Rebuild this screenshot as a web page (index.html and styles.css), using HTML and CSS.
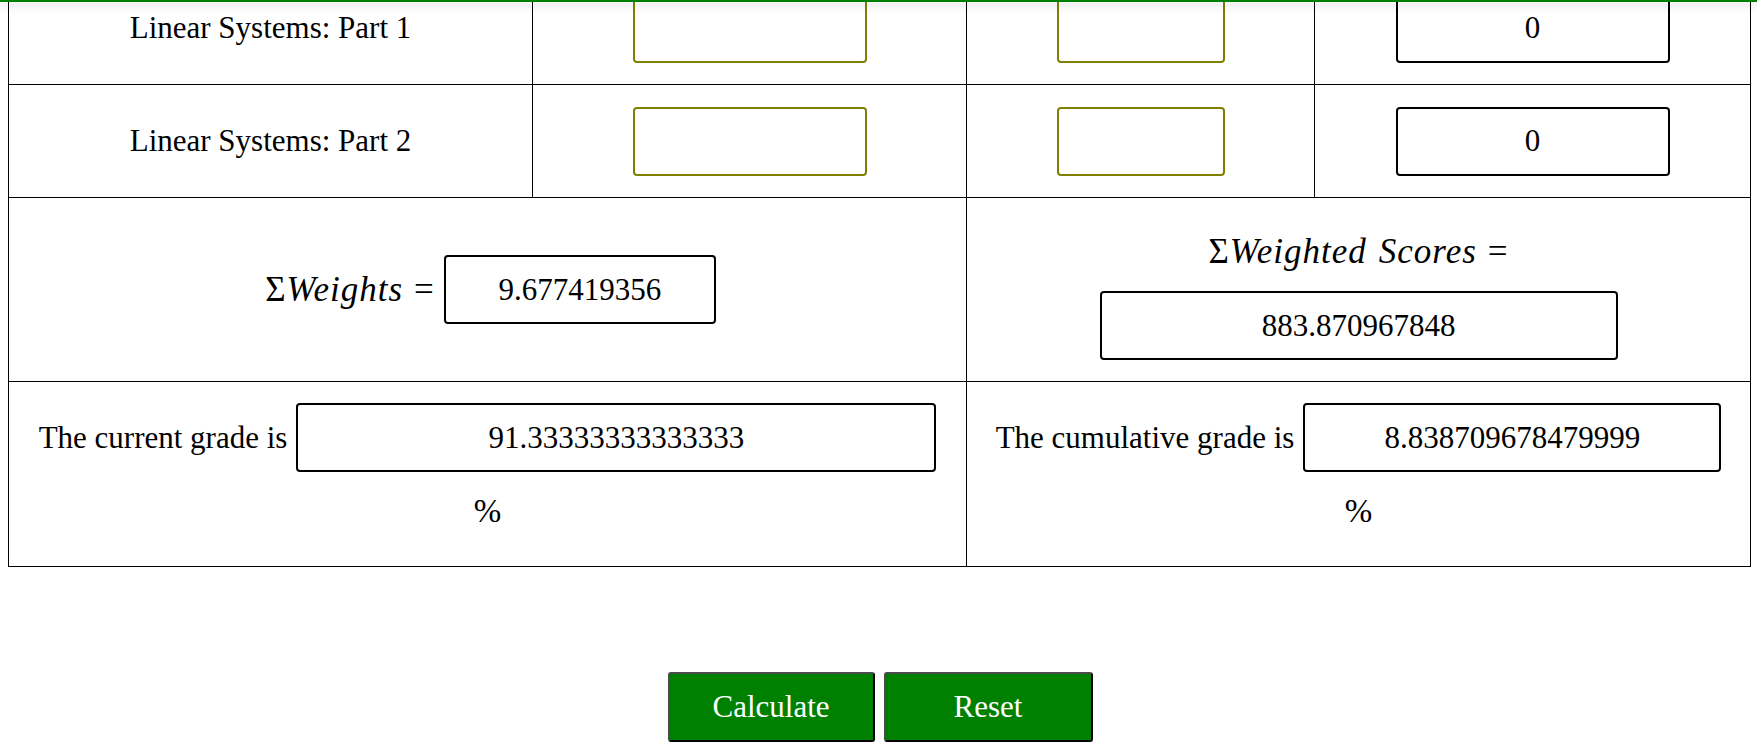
FILE: index.html
```html
<!DOCTYPE html>
<html lang="en">
<head>
<meta charset="utf-8">
<title>Grade Calculator</title>
<link rel="stylesheet" href="styles.css">
</head>
<body>
<div class="topbar"></div>
<main class="page">
  <table class="grades">
    <colgroup>
      <col class="c-name">
      <col class="c-score">
      <col class="c-weight">
      <col class="c-wscore">
    </colgroup>
    <tbody>
      <tr class="row-item">
        <td class="name">Linear Systems: Part 1</td>
        <td><input class="field field-score" type="text"></td>
        <td><input class="field field-weight" type="text"></td>
        <td><input class="out out-wscore" type="text" value="0" readonly></td>
      </tr>
      <tr class="row-item">
        <td class="name">Linear Systems: Part 2</td>
        <td><input class="field field-score" type="text"></td>
        <td><input class="field field-weight" type="text"></td>
        <td><input class="out out-wscore" type="text" value="0" readonly></td>
      </tr>
      <tr class="row-sum">
        <td colspan="2">
          <div class="sum-inline">
            <span class="math">Σ<i>Weights</i><span class="eq">=</span></span>
            <input class="out out-sumw" type="text" value="9.677419356" readonly>
          </div>
        </td>
        <td colspan="2">
          <div class="sum-stack">
            <span class="math">Σ<i>Weighted</i><span class="sp"></span><i>Scores</i><span class="eq">=</span></span>
            <input class="out out-sumws" type="text" value="883.870967848" readonly>
          </div>
        </td>
      </tr>
      <tr class="row-grade">
        <td colspan="2">
          <div class="grade-line">
            <span>The current grade is</span>
            <input class="out out-current" type="text" value="91.33333333333333" readonly>
          </div>
          <div class="pct">%</div>
        </td>
        <td colspan="2">
          <div class="grade-line">
            <span>The cumulative grade is</span>
            <input class="out out-cumulative" type="text" value="8.838709678479999" readonly>
          </div>
          <div class="pct">%</div>
        </td>
      </tr>
    </tbody>
  </table>
  <div class="actions">
    <button class="btn btn-calc" type="button">Calculate</button>
    <button class="btn btn-reset" type="button">Reset</button>
  </div>
</main>
</body>
</html>
```

FILE: styles.css
```css
html, body {
  margin: 0;
  padding: 0;
  background: #fff;
}

body {
  font-family: "Liberation Serif", "Times New Roman", serif;
  font-size: 31px;
  color: #000;
}

.topbar {
  position: fixed;
  top: 0;
  left: 0;
  right: 0;
  height: 2px;
  background: #008000;
  box-shadow: 0 3px 10px rgba(0, 0, 0, 0.28);
  z-index: 10;
}

.page {
  padding: 0 8px 20px;
}

.grades {
  width: 100%;
  table-layout: fixed;
  border-collapse: collapse;
  margin-top: -29px;
}

.c-name { width: 524px; }
.c-score { width: 434px; }
.c-weight { width: 348px; }
.c-wscore { width: 436px; }

.grades td {
  border: 1px solid #000;
  padding: 0;
  text-align: center;
  vertical-align: middle;
}

.row-item td { height: 112px; }
.row-sum td { height: 183px; }
.row-grade td {
  height: 184px;
  vertical-align: top;
}

.field, .out {
  box-sizing: border-box;
  height: 69px;
  font: inherit;
  text-align: center;
  border-radius: 4px;
  background: #fff;
  color: #000;
  padding: 0 4px;
  margin: 0;
  vertical-align: middle;
}

.field { border: 2px solid #808000; }
.out { border: 2px solid #000; }

.field-score { width: 234px; }
.field-weight { width: 168px; }
.out-wscore { width: 274px; }
.out-sumw { width: 272px; }
.out-sumws { width: 518px; }
.out-current { width: 640px; }
.out-cumulative { width: 418px; }

.math {
  font-family: "Liberation Serif", "Times New Roman", serif;
  font-size: 35px;
  letter-spacing: 1px;
  white-space: nowrap;
}

.math i { font-style: italic; }
.math .eq { margin-left: 11px; }
.math .sp { display: inline-block; width: 12px; }

.sum-inline {
  display: flex;
  align-items: center;
  justify-content: center;
  gap: 9px;
  padding-left: 6px;
}

.sum-stack {
  display: flex;
  flex-direction: column;
  align-items: center;
  gap: 19px;
  padding-top: 13px;
}

.grade-line {
  display: flex;
  align-items: center;
  justify-content: center;
  gap: 9px;
  margin-top: 21px;
}

.pct {
  margin-top: 21px;
  line-height: 36px;
  font-size: 33px;
}

.actions {
  display: flex;
  justify-content: center;
  gap: 9px;
  margin-top: 105px;
  padding-left: 3px;
}

.btn {
  height: 70px;
  font: inherit;
  color: #fff;
  background: #008000;
  border: 2px solid;
  border-color: #4a4a4a #000 #000 #4a4a4a;
  border-radius: 3px;
  padding: 0;
  cursor: pointer;
}

.btn-calc { width: 207px; }
.btn-reset { width: 209px; }
```
